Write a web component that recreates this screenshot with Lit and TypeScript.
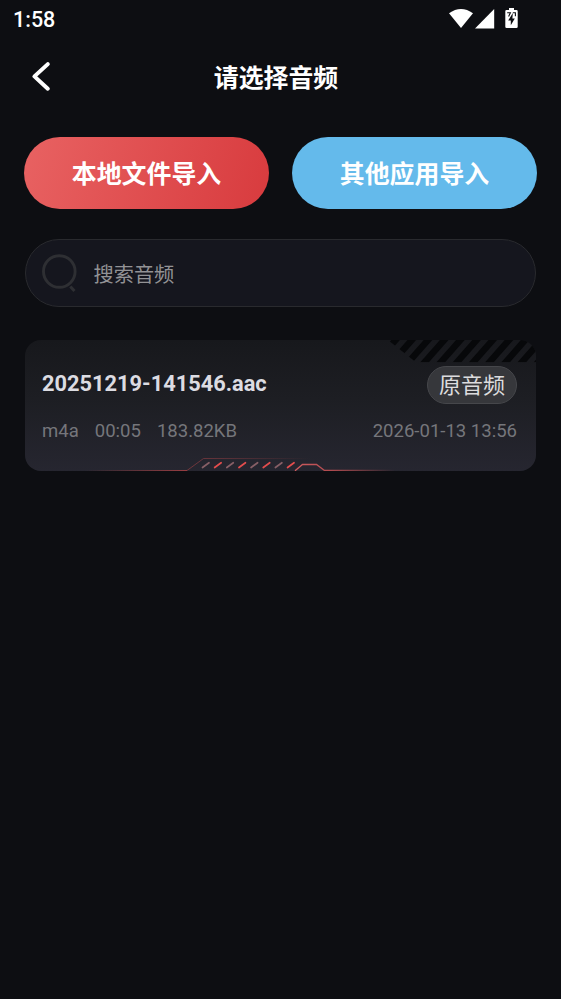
import { LitElement, html, svg, css } from "lit";
import { customElement, property, state } from "lit/decorators.js";

interface AudioFile {
  name: string;
  format: string;
  duration: string;
  size: string;
  date: string;
  tag: string;
}

@customElement("status-bar")
export class StatusBar extends LitElement {
  static styles = css`
    :host {
      display: flex;
      justify-content: space-between;
      height: 40px;
      padding: 0 42px 0 13px;
      box-sizing: border-box;
      font: 500 21.5px/39px Roboto, sans-serif;
    }
    .icons {
      display: block;
    }
  `;

  render() {
    return html`
      <span>1:58</span>
      <svg class="icons" width="70" height="40" viewBox="449 0 70 40">
        <path d="M449 13.2Q461 4.6 473 13.2L461 28Z" fill="#fff" />
        <path d="M494.2 9V28.5H475Z" fill="#fff" />
        <path
          d="M509 8h5v2h2.4q1.3 0 1.3 1.3v15.4q0 1.3-1.3 1.3h-9.8q-1.3 0-1.3-1.3V11.3q0-1.3 1.3-1.3h2.4Z"
          fill="#fff"
        />
        <path
          d="M507.2 12.8h3.2l-1.8 3.6M512.8 12.8h2.6v3.4"
          fill="none"
          stroke="#0d0e12"
          stroke-width="1.1"
        />
        <path d="M512.8 13l-4.6 7.4h2.6v4.8l4-6.8h-2.4Z" fill="#0d0e12" />
      </svg>
    `;
  }
}

@customElement("audio-card")
export class AudioCard extends LitElement {
  @property({ attribute: false }) file!: AudioFile;

  static styles = css`
    :host {
      display: block;
      position: relative;
      height: 131px;
      box-sizing: border-box;
      padding: 26px 19px 0 17px;
      overflow: hidden;
      border-radius: 16px;
      background: linear-gradient(#17181c, #1d1e23 45%, #262630);
      font-family: Roboto, "Noto Sans CJK SC", sans-serif;
    }
    .decor {
      position: absolute;
      inset: 0;
    }
    .row {
      position: relative;
      display: flex;
      justify-content: space-between;
    }
    .name {
      color: #dcdce2;
      font-size: 21.8px;
      font-weight: 700;
      line-height: 36px;
    }
    .tag {
      height: 38px;
      width: 90px;
      box-sizing: border-box;
      border: 1px solid #46474b;
      border-radius: 19px;
      background: #36373b;
      color: #dcdcde;
      font-size: 22px;
      line-height: 37px;
      text-align: center;
    }
    .meta {
      margin-top: 14.5px;
      color: #75767b;
      font-size: 18.55px;
      line-height: 24px;
    }
    .details {
      display: flex;
      gap: 16px;
    }
  `;

  render() {
    const { name, format, duration, size, date, tag } = this.file;
    const stripes = [0, 1, 2, 3, 4, 5, 6, 7, 8, 9, 10];
    const ticks = [0, 1, 2, 3, 4, 5, 6, 7];
    return html`
      <svg class="decor" width="511" height="131" viewBox="0 0 511 131">
        <defs>
          <clipPath id="corner"><path d="M363 0H511V22.3H391Z" /></clipPath>
          <linearGradient id="left" gradientUnits="userSpaceOnUse" x1="60" y1="0" x2="165" y2="0">
            <stop offset="0" stop-color="#9b3e42" stop-opacity="0" />
            <stop offset="1" stop-color="#9b3e42" />
          </linearGradient>
          <linearGradient id="top" gradientUnits="userSpaceOnUse" x1="165" y1="0" x2="285" y2="0">
            <stop offset="0" stop-color="#70363c" />
            <stop offset="1" stop-color="#70363c" stop-opacity="0" />
          </linearGradient>
          <linearGradient id="right" gradientUnits="userSpaceOnUse" x1="270" y1="0" x2="370" y2="0">
            <stop offset="0" stop-color="#cf5c5f" />
            <stop offset=".35" stop-color="#b24b4f" />
            <stop offset="1" stop-color="#b24b4f" stop-opacity="0" />
          </linearGradient>
        </defs>
        <g clip-path="url(#corner)" fill="#07080a">
          ${stripes.map((i) => svg`<path d="M${346.7 + i * 16.2} 22.3l19.6-22.3h8.6l-19.6 22.3z" />`)}
        </g>
        <path d="M60 130.5H162" stroke="url(#left)" fill="none" />
        <path d="M162 130.5L178.5 118.5H285" stroke="url(#top)" fill="none" />
        ${ticks.map(
          (i) => svg`<path
            d="M${177.5 + i * 12.15} 127.5l6.5-4.8"
            stroke=${i % 2 ? "#e34d4d" : "#875f66"}
            stroke-width="1.7"
            stroke-linecap="round"
          />`
        )}
        <path
          d="M270 130.8L277.5 124.5H291.5L299.5 130.5H370"
          stroke="url(#right)"
          stroke-width="1.3"
          fill="none"
        />
      </svg>
      <div class="row">
        <span class="name">${name}</span>
        <span class="tag">${tag}</span>
      </div>
      <div class="row meta">
        <div class="details">
          <span>${format}</span>
          <span>${duration}</span>
          <span>${size}</span>
        </div>
        <span>${date}</span>
      </div>
    `;
  }
}

@customElement("app-root")
export class AppRoot extends LitElement {
  @state() private query = "";

  private files: AudioFile[] = [
    {
      name: "20251219-141546.aac",
      format: "m4a",
      duration: "00:05",
      size: "183.82KB",
      date: "2026-01-13 13:56",
      tag: "原音频",
    },
  ];

  static styles = css`
    :host {
      display: block;
      min-height: 999px;
      background: #0d0e12;
      color: #fff;
      font-family: Roboto, "Noto Sans CJK SC", sans-serif;
    }
    header {
      display: grid;
      grid-template-columns: 80px 1fr 80px;
      align-items: center;
      height: 74px;
      padding-right: 9px;
    }
    .back {
      justify-self: start;
      margin-left: 30px;
      padding: 0;
      border: none;
      background: none;
      line-height: 0;
    }
    h1 {
      margin: 0;
      padding-top: 4px;
      font-size: 24.9px;
      font-weight: 700;
      line-height: 36px;
      text-align: center;
    }
    .actions {
      display: grid;
      grid-template-columns: 1fr 1fr;
      gap: 23px;
      padding: 23px 24px 0;
    }
    .action {
      height: 72px;
      padding: 0 0 2px;
      border: none;
      border-radius: 36px;
      color: #fff;
      font: 700 24.9px/70px "Noto Sans CJK SC", sans-serif;
    }
    .local {
      background: linear-gradient(106deg, #e86262, #d83b3e);
    }
    .other {
      background: #64baeb;
    }
    .search {
      display: flex;
      align-items: center;
      height: 68px;
      box-sizing: border-box;
      margin: 30px 25px 0;
      padding: 2px 0 0 16px;
      border: 1px solid #292a2e;
      border-radius: 34px;
      background: #15161e;
    }
    .search input {
      flex: 1;
      min-width: 0;
      margin-left: 14.5px;
      padding: 0;
      border: none;
      outline: none;
      background: none;
      color: #ddd;
      font: 20.2px/30px "Noto Sans CJK SC", sans-serif;
    }
    .search input::placeholder {
      color: #929295;
    }
    .list {
      display: grid;
      gap: 16px;
      padding: 33px 25px 0;
    }
  `;

  private onInput(e: Event) {
    this.query = (e.target as HTMLInputElement).value;
  }

  render() {
    const shown = this.files.filter((f) => f.name.includes(this.query));
    return html`
      <status-bar></status-bar>
      <header>
        <button class="back" aria-label="返回">
          <svg width="22" height="32" viewBox="0 0 22 32">
            <path
              d="M17.8 3.1L4.4 15.4L17.8 27.7"
              fill="none"
              stroke="#fff"
              stroke-width="4"
              stroke-linecap="round"
              stroke-linejoin="round"
            />
          </svg>
        </button>
        <h1>请选择音频</h1>
      </header>
      <div class="actions">
        <button class="action local">本地文件导入</button>
        <button class="action other">其他应用导入</button>
      </div>
      <div class="search">
        <svg width="37" height="40" viewBox="0 0 37 40" fill="none" stroke="#2e2f33">
          <circle cx="17.3" cy="17.5" r="15.8" stroke-width="2.9" />
          <path d="M28.3 32.4l4.2 4.6" stroke-width="3" />
        </svg>
        <input placeholder="搜索音频" .value=${this.query} @input=${this.onInput} />
      </div>
      <div class="list">
        ${shown.map((f) => html`<audio-card .file=${f}></audio-card>`)}
      </div>
    `;
  }
}
